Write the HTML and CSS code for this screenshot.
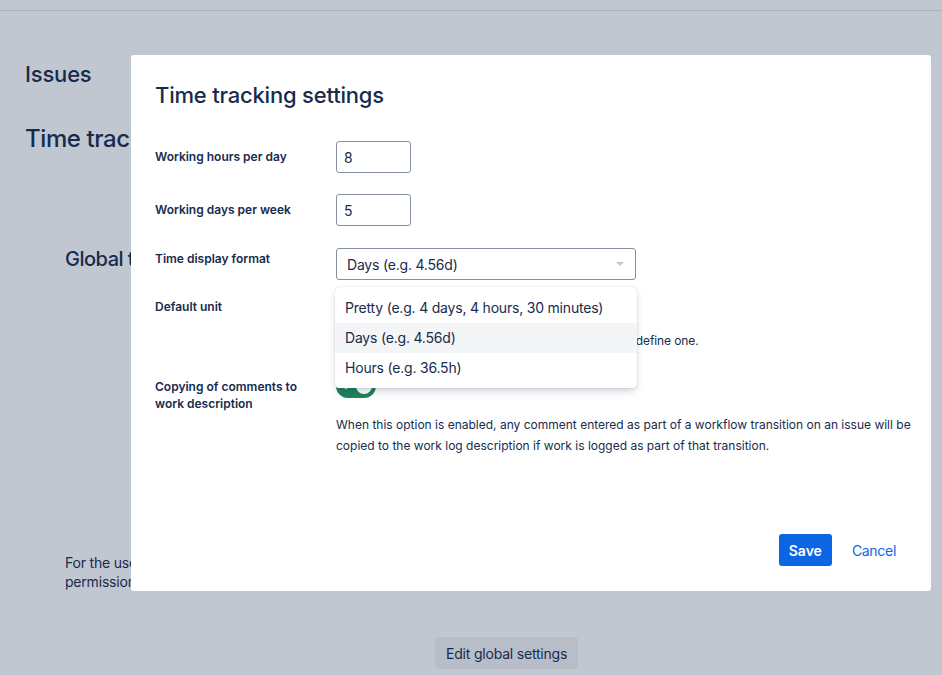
FILE: index.html
```html
<!DOCTYPE html>
<html>
<head>
<meta charset="utf-8">
<link rel="stylesheet" href="styles.css">
</head>
<body>
<div class="page">
  <div class="topbar"></div>
  <main class="main">
    <h1 class="h-issues">Issues</h1>
    <h2 class="h-tt">Time tracking</h2>
    <section class="global">
      <h3 class="h-global">Global time tracking settings</h3>
      <div class="global-spacer"></div>
      <p class="global-note">For the user to log work, they need the Work On Issues<br>permission in the project's permission scheme.</p>
    </section>
  </main>
  <div class="edit-row"><button class="edit-btn">Edit global settings</button></div>

  <div class="modal">
    <div class="modal-header">
      <h1 class="modal-title">Time tracking settings</h1>
    </div>
    <div class="modal-body">
      <div class="row row-1">
        <label class="label lbl-input">Working hours per day</label>
        <div class="field"><input class="num" value="8"></div>
      </div>
      <div class="row row-2">
        <label class="label lbl-input">Working days per week</label>
        <div class="field"><input class="num" value="5"></div>
      </div>
      <div class="row row-3">
        <label class="label lbl-select">Time display format</label>
        <div class="field select-wrap">
          <div class="select">
            <span>Days (e.g. 4.56d)</span>
            <span class="caret"></span>
          </div>
          <ul class="menu">
            <li class="opt">Pretty (e.g. 4 days, 4 hours, 30 minutes)</li>
            <li class="opt opt-active">Days (e.g. 4.56d)</li>
            <li class="opt">Hours (e.g. 36.5h)</li>
          </ul>
        </div>
      </div>
      <div class="row row-4">
        <label class="label lbl-select">Default unit</label>
        <div class="field">
          <div class="select"><span></span><span class="caret"></span></div>
          <p class="help">The default unit used for tracking if the user does not define one.</p>
        </div>
      </div>
      <div class="row row-5">
        <label class="label lbl-toggle">Copying of comments to<br>work description</label>
        <div class="field">
          <span class="toggle">
            <svg class="tick" width="10" height="10" viewBox="0 0 10 10"><path d="M1.5 5.2 L4 7.5 L8.5 2.5" fill="none" stroke="#fff" stroke-width="1.6" stroke-linecap="round" stroke-linejoin="round"/></svg>
            <span class="knob"></span>
          </span>
          <p class="desc">When this option is enabled, any comment entered as part of a workflow transition on an issue will be copied to the work log description if work is logged as part of that transition.</p>
        </div>
      </div>
    </div>
    <div class="modal-footer">
      <button class="btn-save">Save</button>
      <button class="btn-cancel">Cancel</button>
    </div>
  </div>
</div>
</body>
</html>
```

FILE: styles.css
```css
* { box-sizing: border-box; }
html, body { margin: 0; padding: 0; }
body {
  background: #c1c7d0;
  font-family: Inter, "Noto Sans", sans-serif;
  color: #172b4d;
  width: 942px;
  height: 675px;
  overflow: hidden;
}
.page { position: relative; width: 942px; height: 675px; }
.topbar { height: 11px; border-bottom: 1px solid #a9b0bb; }

.main { padding-left: 25px; width: 131px; overflow: hidden; white-space: nowrap; }
.h-issues { margin: 48px 0 0; font-size: 22px; line-height: 30px; font-weight: 500; letter-spacing: -0.2px; }
.h-tt { margin: 35px 0 0; font-size: 24px; line-height: 30px; font-weight: 500; letter-spacing: -0.4px; }
.global { padding-left: 40px; }
.h-global { margin: 92px 0 0; font-size: 20px; line-height: 26px; font-weight: 500; letter-spacing: -0.5px; }
.global-spacer { height: 281px; }
.global-note { margin: 0; font-size: 14px; line-height: 19px; letter-spacing: -0.2px; }
.edit-row { padding-left: 435px; margin-top: 46px; }
.edit-btn {
  font-family: inherit; font-size: 14px; color: #172b4d; letter-spacing: -0.2px;
  background: #b8bec8; border: 0; border-radius: 3px;
  height: 32px; padding: 0 11px;
}

.modal {
  position: absolute; left: 131px; top: 55px;
  width: 800px; height: 536px;
  background: #fff; border-radius: 3px;
  display: flex; flex-direction: column;
}
.modal-header { padding: 26px 24px 0; }
.modal-title { margin: 0; font-size: 22px; line-height: 28px; font-weight: 500; color: #172b4d; letter-spacing: -0.2px; }
.modal-body { flex: 1; padding: 32px 24px 0; }

.row { display: flex; }
.label { width: 181px; flex: none; font-size: 12px; font-weight: 600; line-height: 16px; }
.lbl-input { padding-top: 8px; }
.lbl-select { padding-top: 3px; }
.lbl-toggle { padding-top: 4px; line-height: 17px; }
.field { flex: 1; }
.row-2 { margin-top: 21px; }
.row-3 { margin-top: 22px; }
.row-4 { margin-top: 16px; }
.row-5 { margin-top: 23px; }

.num {
  width: 75px; height: 32px;
  border: 1px solid #8590a2; border-radius: 3px;
  padding: 0 7px; font-family: inherit; font-size: 14px; color: #172b4d;
  outline: none;
}
.select {
  width: 300px; height: 32px;
  border: 1px solid #8590a2; border-radius: 3px;
  display: flex; align-items: center; justify-content: space-between;
  padding: 0 10px 0 10px; font-size: 14px; color: #172b4d; letter-spacing: -0.2px;
}
.caret {
  width: 0; height: 0;
  border-left: 4px solid transparent; border-right: 4px solid transparent;
  border-top: 4px solid #c1c7d0; margin-right: 1px;
}
.select-wrap { position: relative; }
.menu {
  position: absolute; left: -1px; top: 39px; z-index: 2;
  width: 302px; margin: 0; padding: 6px 0 5px; list-style: none;
  background: #fff; border-radius: 4px;
  box-shadow: 0 4px 8px -2px rgba(9,30,66,0.25), 0 0 1px rgba(9,30,66,0.31);
}
.opt { height: 30px; line-height: 30px; padding-left: 10px; font-size: 14px; color: #172b4d; letter-spacing: -0.2px; }
.opt-active { background: #f4f5f7; }
.help { margin: 3px 0 0; font-size: 12px; line-height: 20px; white-space: nowrap; letter-spacing: -0.1px; }

.toggle {
  display: flex; align-items: center; justify-content: space-between;
  width: 40px; height: 24px; border-radius: 12px;
  background: #1f845a; padding: 0 4px 0 6px;
}
.knob { width: 16px; height: 16px; border-radius: 50%; background: #fff; }
.desc { margin: 16px 0 0; font-size: 12px; line-height: 21px; width: 582px; }

.modal-footer { display: flex; justify-content: flex-end; gap: 8px; padding: 0 23px 25px; }
.btn-save {
  height: 32px; padding: 0 10px; border: 0; border-radius: 3px;
  background: #0c66e4; color: #fff; font-family: inherit; font-size: 14px; font-weight: 600;
}
.btn-cancel {
  height: 32px; padding: 0 12px; border: 0; background: transparent;
  color: #0c66e4; font-family: inherit; font-size: 14px; letter-spacing: -0.3px;
}
```
